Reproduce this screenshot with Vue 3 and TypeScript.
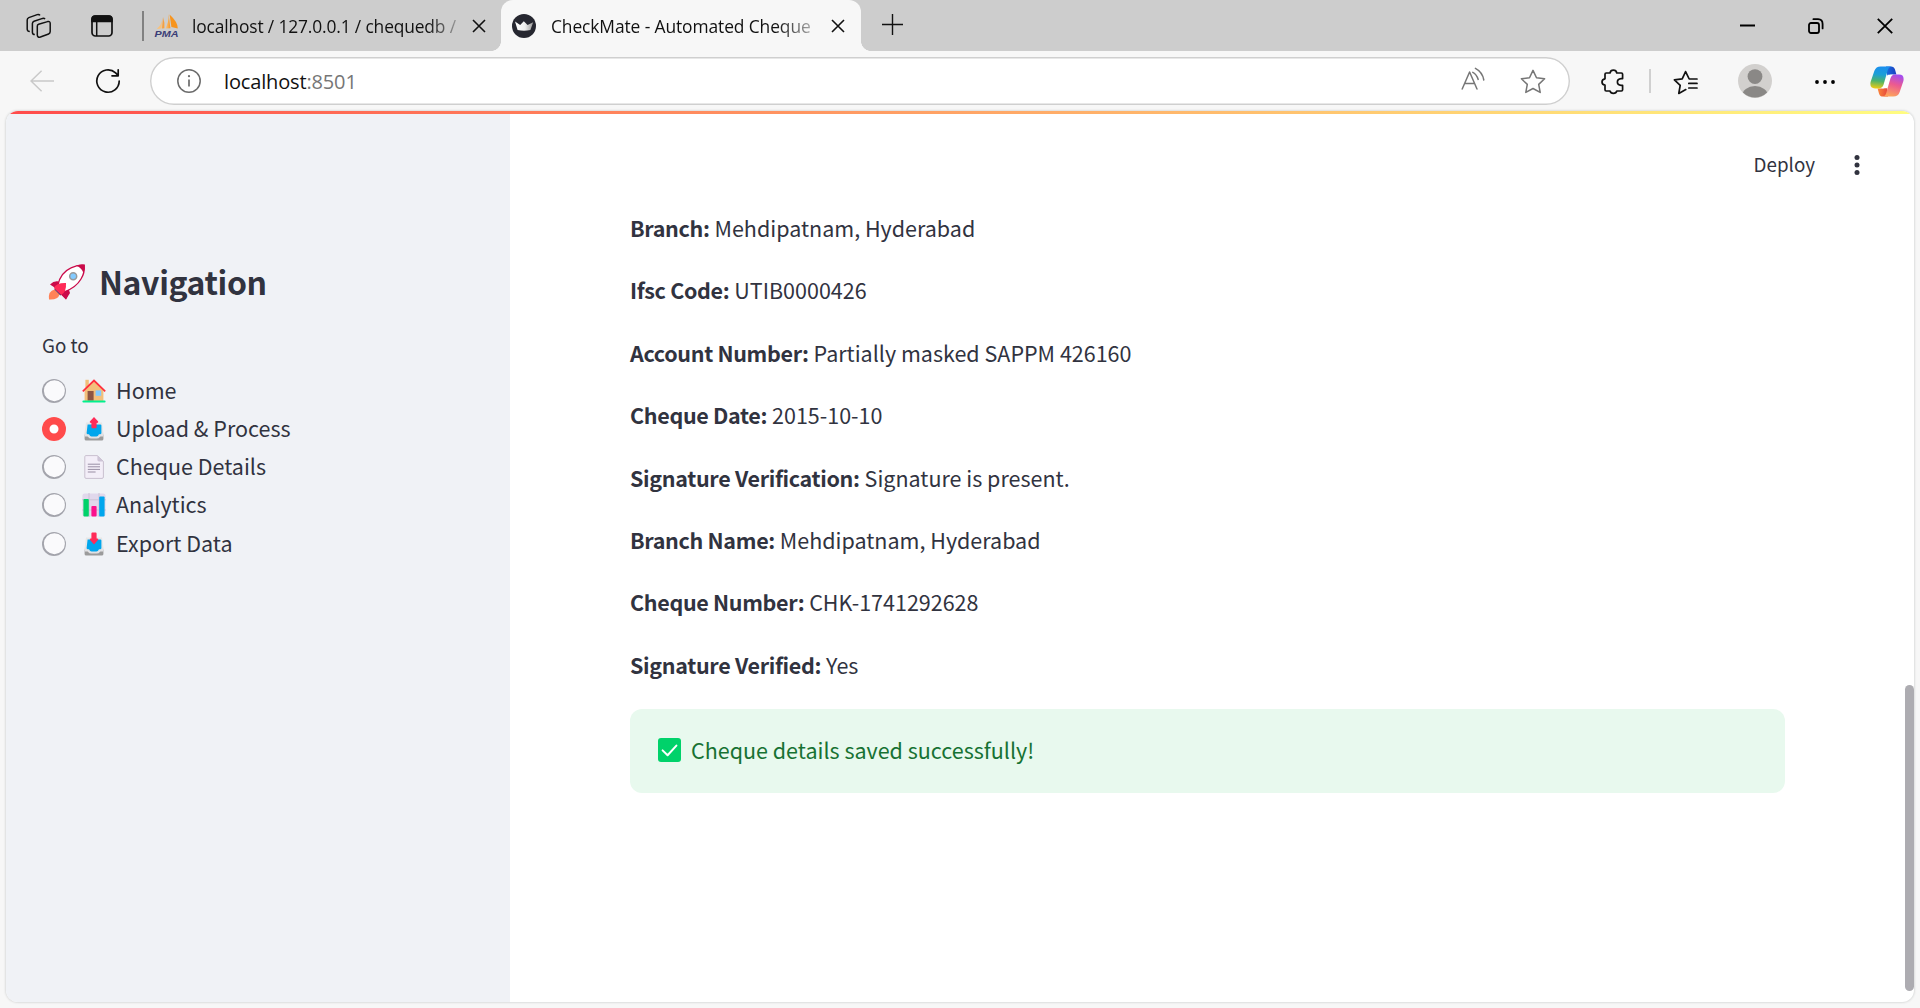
<script setup lang="ts">
interface Detail {
  label: string
  value: string
}

const details: Detail[] = [
  { label: 'Branch:', value: 'Mehdipatnam, Hyderabad' },
  { label: 'Ifsc Code:', value: 'UTIB0000426' },
  { label: 'Account Number:', value: 'Partially masked SAPPM 426160' },
  { label: 'Cheque Date:', value: '2015-10-10' },
  { label: 'Signature Verification:', value: 'Signature is present.' },
  { label: 'Branch Name:', value: 'Mehdipatnam, Hyderabad' },
  { label: 'Cheque Number:', value: 'CHK-1741292628' },
  { label: 'Signature Verified:', value: 'Yes' },
]

type IconName = 'home' | 'upload' | 'page' | 'chart' | 'export'

const pages: { label: string; icon: IconName; active?: boolean }[] = [
  { label: 'Home', icon: 'home' },
  { label: 'Upload & Process', icon: 'upload', active: true },
  { label: 'Cheque Details', icon: 'page' },
  { label: 'Analytics', icon: 'chart' },
  { label: 'Export Data', icon: 'export' },
]
</script>

<template>
  <div class="window">
    <header class="tabbar">
      <svg class="ic-work" width="28" height="28" viewBox="0 0 28 28" fill="none" stroke="#111" stroke-width="1.5" stroke-linejoin="round">
        <path d="M13.6 12.2 L22.6 9.6 Q25.2 9 25.2 11.4 V19.6 Q25.2 21.4 23.6 22 L15.4 25 Q12.6 25.9 12.3 23.2 V14.2 Q12.2 12.6 13.6 12.2Z" />
        <path d="M9.8 22.6 Q7.6 22.6 7.4 20.4 V11.6 Q7.4 9.8 9 9.2 L17.6 6.4 Q19.2 6 20 7.2" />
        <path d="M4.8 19.6 Q2.4 19.4 2.2 17.2 V8 Q2.2 6.2 3.8 5.6 L12.2 2.6 Q14 2 15 3.4" />
      </svg>
      <svg class="ic-vert" width="24" height="24" viewBox="0 0 24 24">
        <rect x="2" y="2" width="20" height="20" rx="3.4" fill="none" stroke="#111" stroke-width="1.7" />
        <path d="M1.2 8.2 V5 Q1.2 1.2 5 1.2 H19 Q22.8 1.2 22.8 5 V8.2Z" fill="#111" />
        <path d="M6.7 8 V22" stroke="#111" stroke-width="1.5" />
      </svg>
      <span class="tab-divider"></span>
      <div class="tab tab-back">
        <svg class="pma" width="26" height="26" viewBox="0 0 26 26">
          <defs>
            <linearGradient id="sail" x1="0" x2="1" y1="0" y2="0">
              <stop offset="0" stop-color="#f8c98a" />
              <stop offset="1" stop-color="#f7941d" />
            </linearGradient>
          </defs>
          <path d="M8.2 5 Q8.4 11 2.8 16 L7.6 15.4Z" fill="#f9c27c" />
          <path d="M9 4 Q11 10 10.4 15.2 L8 15.4Z" fill="#f5a040" />
          <path d="M14.6 1 Q15 9 11.4 15.4 L16.4 15.2Z" fill="url(#sail)" />
          <path d="M15.6 1.4 Q24 9 23.8 15.6 L17.4 14Z" fill="#f7941d" />
          <text x="0.5" y="24" font-size="8.6" font-weight="700" font-style="italic" textLength="24" lengthAdjust="spacingAndGlyphs" fill="#3a3d77">PMA</text>
        </svg>
        <span class="title title-back">localhost / 127.0.0.1 / chequedb /</span>
        <svg class="x" width="14" height="14" viewBox="0 0 14 14" stroke="#111" stroke-width="1.6"><path d="M1 1 L13 13 M13 1 L1 13" /></svg>
      </div>
      <div class="tab tab-front">
        <svg width="24" height="24" viewBox="0 0 24 24">
          <defs>
            <linearGradient id="crown" x1="0" x2="1" y1="0" y2="0">
              <stop offset="0" stop-color="#fff" />
              <stop offset=".55" stop-color="#eee" />
              <stop offset="1" stop-color="#999" />
            </linearGradient>
          </defs>
          <circle cx="12" cy="12" r="12" fill="#262730" />
          <path d="M3 7.6 L8.2 11 L11.8 7.2 L15.6 11 L21.2 8.2 L18.4 16 Q12 17.4 5.6 16Z" fill="url(#crown)" />
        </svg>
        <span class="title title-front">CheckMate - Automated Cheque</span>
        <svg class="x" width="14" height="14" viewBox="0 0 14 14" stroke="#111" stroke-width="1.6"><path d="M1 1 L13 13 M13 1 L1 13" /></svg>
      </div>
      <svg class="plus" width="21" height="21" viewBox="0 0 21 21" stroke="#111" stroke-width="1.4"><path d="M10.5 0 V21 M0 10.5 H21" /></svg>
      <div class="controls">
        <svg width="15" height="16" viewBox="0 0 15 16"><path d="M0 7.5 H15" stroke="#000" stroke-width="2" /></svg>
        <svg width="16" height="16" viewBox="0 0 16 16" fill="none" stroke="#000" stroke-width="1.8">
          <rect x="1" y="5" width="10" height="10" rx="2" />
          <path d="M5.4 1.2 H10 Q14.6 1.4 14.6 6 V10.4" stroke-linecap="round" />
        </svg>
        <svg width="16" height="16" viewBox="0 0 16 16" stroke="#000" stroke-width="1.8"><path d="M.8 .8 L15.2 15.2 M15.2 .8 L.8 15.2" /></svg>
      </div>
    </header>

    <div class="toolbar">
      <svg class="back" width="24" height="22" viewBox="0 0 24 22" fill="none" stroke="#c9c9c9" stroke-width="1.5"><path d="M24 11 H1 M11.6 .8 L1 11 L11.6 21.2" /></svg>
      <svg class="reload" width="26" height="26" viewBox="0 0 26 26" fill="none" stroke="#111" stroke-width="1.7" stroke-linecap="round" stroke-linejoin="round"><path d="M24.2 13 A11.2 11.2 0 1 1 20.6 4.8 L23 7.4 M23.2 1.8 V7.8 H17" /></svg>
      <div class="address">
        <svg class="info" width="24" height="24" viewBox="0 0 24 24" fill="none" stroke="#6b6b6b" stroke-width="1.5">
          <circle cx="12" cy="12" r="11.2" />
          <path d="M12 10.4 V17.6" stroke-width="1.7" />
          <circle cx="12" cy="7.2" r="1.1" fill="#6b6b6b" stroke="none" />
        </svg>
        <span class="url">localhost<span class="port">:8501</span></span>
        <svg class="aloud" width="24" height="24" viewBox="0 0 24 24" fill="none" stroke="#767676" stroke-width="1.5" stroke-linecap="round" stroke-linejoin="round">
          <path d="M1.2 22 L8.6 5 L16 22 M3.8 16.4 H13.4" />
          <path d="M11.8 5.4 Q15.6 7.4 17.2 12.4 M14.4 1.4 Q21.4 5 22.8 13" />
        </svg>
        <svg class="star" width="26" height="25" viewBox="0 0 26 25" fill="none" stroke="#767676" stroke-width="1.5" stroke-linejoin="round"><path d="M13 1.4 L16.5 8.7 L24.6 9.8 L18.7 15.4 L20.2 23.4 L13 19.5 L5.8 23.4 L7.3 15.4 L1.4 9.8 L9.5 8.7Z" /></svg>
      </div>
      <svg class="puzzle" width="24" height="26" viewBox="0 0 24 26" fill="none" stroke="#111" stroke-width="1.7" stroke-linejoin="round">
        <path d="M5.2 4 H9 Q9.6 1.2 12.4 1.2 Q15.2 1.2 15.8 4 H20.4 Q21.6 4 21.6 5.2 V9.6 H20.2 Q16.4 10 16.4 13 Q16.4 16 20.2 16.4 H21.6 V20.8 Q21.6 22 20.4 22 H15.8 Q15.2 24.4 12.4 24.4 Q9.6 24.4 9 22 H5.2 Q4 22 4 20.8 V16.2 Q1 15.8 1 13 Q1 10.2 4 9.8 V5.2 Q4 4 5.2 4Z" />
      </svg>
      <span class="tool-divider"></span>
      <svg class="favs" width="26" height="25" viewBox="0 0 26 25" fill="none" stroke="#111" stroke-width="1.7" stroke-linejoin="round" stroke-linecap="round">
        <path d="M24 9 H16.2 L12.6 1.6 L9.2 8.8 L1.4 9.8 L7.2 15.4 L5.8 23.4 L12.8 19.6" />
        <path d="M15.8 13.4 H24 M15.8 18 H24" />
      </svg>
      <svg class="avatar" width="34" height="34" viewBox="0 0 34 34">
        <defs><clipPath id="disc"><circle cx="17" cy="17" r="16.6" /></clipPath></defs>
        <circle cx="17" cy="17" r="17" fill="#d2d0ce" />
        <g clip-path="url(#disc)" fill="#8a8886">
          <circle cx="17" cy="12.6" r="7.4" />
          <ellipse cx="17" cy="32" rx="13" ry="10" />
        </g>
      </svg>
      <svg class="dots" width="20" height="4" viewBox="0 0 20 4"><circle cx="2" cy="2" r="1.9" /><circle cx="10" cy="2" r="1.9" /><circle cx="18" cy="2" r="1.9" /></svg>
      <svg class="copilot" width="34" height="31" viewBox="0 0 34 31">
        <defs>
          <linearGradient id="cpA" x1=".3" x2=".2" y1="0" y2="1">
            <stop offset="0" stop-color="#1b8fee" />
            <stop offset=".35" stop-color="#1c9fd6" />
            <stop offset=".65" stop-color="#4cb36c" />
            <stop offset="1" stop-color="#f2cc10" />
          </linearGradient>
          <linearGradient id="cpB" x1=".7" x2=".4" y1="0" y2="1">
            <stop offset="0" stop-color="#a34df0" />
            <stop offset=".45" stop-color="#ec5a90" />
            <stop offset="1" stop-color="#fda55c" />
          </linearGradient>
          <linearGradient id="cpC" x1="0" x2="1"><stop offset="0" stop-color="#1b6fe0" /><stop offset="1" stop-color="#1a3fc0" /></linearGradient>
          <linearGradient id="cpD" x1="0" x2="1"><stop offset="0" stop-color="#fb8a3c" /><stop offset="1" stop-color="#e5433d" /></linearGradient>
        </defs>
        <path d="M16 .4 H21 Q24 .4 25 3.6 L26.4 8.6 H21 Q18.6 8.6 17.4 12Z" fill="url(#cpC)" />
        <path d="M18 30.6 H13 Q10 30.6 9 27.4 L7.6 22.4 H13 Q15.6 22.4 16.8 19Z" fill="url(#cpD)" />
        <path d="M17.6 8.8 H23 L17 22.2 H11.6Z" fill="#fff" />
        <path d="M10.6 .4 H21.6 Q18.6 .8 17.6 4.6 L13.6 18.6 Q12.4 22.4 9 22.4 H5 Q-.6 22.4 .6 16 L4.4 4.8 Q6 .4 10.6 .4Z" fill="url(#cpA)" />
        <path d="M23.4 30.6 H12.4 Q15.4 30.2 16.4 26.4 L20.4 12.4 Q21.6 8.6 25 8.6 H29 Q34.6 8.6 33.4 15 L29.6 26.2 Q28 30.6 23.4 30.6Z" fill="url(#cpB)" />
      </svg>
    </div>

    <div class="page">
      <div class="decoration"></div>
      <div class="body">
        <aside class="sidebar">
          <h1>
            <svg class="rocket" width="38" height="38" viewBox="0 0 38 38">
              <path d="M1 36.4 Q0 28 6.6 26.6 L11.6 31.4 Q10 37 1 36.4Z" fill="#ff8257" />
              <path d="M6.4 26.4 L10 22 L17 29 L12.4 32.4Z" fill="#533566" />
              <path d="M2 21.4 Q6.4 17 11.4 18.6 L17 29.4 Q21 26.4 21 29 L18 36.6 L14.6 32.8 L6.2 24.2Z" fill="#ca0b4a" />
              <path d="M20.6 26 L22 30 L18 36.6 L12.8 31.6Z" fill="#ca0b4a" />
              <path d="M9.8 22.6 Q12 9.8 23 4.8 Q30 1.4 36.2 2.2 Q37 9.6 33 16 Q28 24.6 16.4 28.8Z" fill="#fff" stroke="#ca0b4a" stroke-width="1.3" />
              <path d="M28 2.6 Q32.6 1.2 36.6 1.8 Q37.2 6 35.4 10.6 Q34.6 5.4 28 2.6Z" fill="#ca0b4a" />
              <path d="M5.8 25 Q8.6 19.6 18 20 Q18.6 29 13.2 32Z" fill="#ff2b58" />
              <circle cx="25.2" cy="13.2" r="3.5" fill="#83cbff" stroke="#999" stroke-width="1.5" />
            </svg>
            <span>Navigation</span>
          </h1>
          <p class="goto">Go to</p>
          <ul class="radios">
            <li v-for="p in pages" :key="p.label">
              <span class="radio" :class="{ on: p.active }"></span>
              <svg width="24" height="24" viewBox="0 0 24 24">
                <template v-if="p.icon === 'home'">
                  <rect x="3.4" y=".8" width="3.4" height="8" fill="#f1bf7a" />
                  <path d="M2.6 11.4 L12 2.6 L21.4 11.4 V22 H2.6Z" fill="#f3c07b" />
                  <rect x="5.6" y="12" width="6" height="9.6" fill="#8c5543" />
                  <rect x="13.6" y="11.4" width="5.6" height="5.4" fill="#83cbff" />
                  <path d="M.8 12.4 L12 1.6 L23.2 12.4" fill="none" stroke="#ff2f3c" stroke-width="1.8" />
                  <rect x=".4" y="21.6" width="23.2" height="2" rx="1" fill="#00f08e" />
                </template>
                <template v-else-if="p.icon === 'upload' || p.icon === 'export'">
                  <path d="M4 5.6 H20 L21.6 17 H2.4Z" fill="#e6e6e6" />
                  <path d="M2.6 17.4 H7 Q8 20 10 20 H14 Q16 20 17 17.4 H21.4 V22 Q21.4 23.6 19.8 23.6 H4.2 Q2.6 23.6 2.6 22Z" fill="#9b9b9b" />
                  <path d="M2.8 15.6 H7 Q8 19 10 19 H14 Q16 19 17 15.6 H21.2 L21.4 19.4 H18.4 Q16.6 21.6 14.6 21.6 H9.4 Q7.4 21.6 5.6 19.4 H2.6Z" fill="#e1e1e4" />
                  <path d="M5.6 7.4 H18.4 Q19.4 7.4 19.4 8.6 V16.2 Q19.2 17.2 18 17.2 H17 Q16 19.4 14.4 19.4 H9.6 Q8 19.4 7 17.2 H6 Q4.6 17.2 4.6 16Z" fill="#00a6ed" />
                  <path v-if="p.icon === 'upload'" d="M12 0 L16.2 4.6 Q16.6 6 15 6 H14.6 V10 Q14.6 11.2 13.6 11.2 H10.4 Q9.4 11.2 9.4 10 V6 H9 Q7.4 6 7.8 4.6Z" fill="#ff2b58" />
                  <path v-else d="M12 12.4 L16.2 7.8 Q16.6 6.6 15 6.6 H14.6 V1.6 Q14.6 .6 13.6 .6 H10.4 Q9.4 .6 9.4 1.6 V6.6 H9 Q7.4 6.6 7.8 7.8Z" fill="#ff2b58" />
                </template>
                <template v-else-if="p.icon === 'page'">
                  <path d="M3.8 .6 H15.4 L21.4 6.4 V22 Q21.4 23.4 20 23.4 H4 Q2.8 23.4 2.8 22 V1.8 Q2.8 .6 3.8 .6Z" fill="#f3eef8" stroke="#c9c0cf" stroke-width="1" />
                  <path d="M15.4 .6 L21.4 6.4 H17 Q15.4 6.4 15.4 5Z" fill="#cdc4d6" />
                  <path d="M5.8 9.2 H18 M5.8 11.8 H18 M5.8 14.4 H18 M5.8 17 H13.6" stroke="#998ea4" stroke-width="1" />
                </template>
                <template v-else>
                  <rect x=".4" y=".4" width="23.2" height="23.2" rx="2.4" fill="#e1d8ec" />
                  <path d="M7 0 V24 M17 0 V24 M0 6.8 H24 M0 17 H24" stroke="#cdc4d6" stroke-width="1" />
                  <rect x="1.4" y="6" width="5.4" height="17.6" rx="1" fill="#00d26a" />
                  <rect x="9.4" y="13" width="5.2" height="10.6" rx="1" fill="#fc0f8c" />
                  <rect x="17.2" y="3.4" width="5.4" height="20.2" rx="1" fill="#00a6ed" />
                </template>
              </svg>
              <span class="page-name">{{ p.label }}</span>
            </li>
          </ul>
        </aside>

        <main class="main">
          <div class="app-header">
            <span class="deploy">Deploy</span>
            <svg width="6" height="20" viewBox="0 0 6 20" fill="#31333f"><circle cx="3" cy="2.5" r="2.5" /><circle cx="3" cy="10" r="2.5" /><circle cx="3" cy="17.5" r="2.5" /></svg>
          </div>
          <div class="content">
            <p v-for="d in details" :key="d.label"><strong>{{ d.label }}</strong> {{ d.value }}</p>
            <div class="alert">
              <svg width="23" height="24" viewBox="0 0 23 24">
                <rect width="23" height="24" rx="3" fill="#00d26a" />
                <path d="M4.6 12.4 L9.6 17.2 L18.4 7.6" fill="none" stroke="#fff" stroke-width="2" stroke-linecap="round" stroke-linejoin="round" />
              </svg>
              <span>Cheque details saved successfully!</span>
            </div>
          </div>
        </main>
        <div class="scroll"><div class="thumb"></div></div>
      </div>
    </div>
  </div>
</template>

<style>
body {
  margin: 0;
  overflow: hidden;
}
</style>

<style scoped>
.window {
  width: 1920px;
  height: 1008px;
  display: flex;
  flex-direction: column;
  overflow: hidden;
  background: #f7f7f7;
  font-family: "Noto Sans CJK SC", "Source Sans Pro", sans-serif;
  color: #31333f;
}
svg {
  display: block;
  flex: none;
}
.tabbar {
  height: 51px;
  flex: none;
  display: flex;
  align-items: center;
  background: #cdcdcd;
  font-family: "Open Sans", "Segoe UI", sans-serif;
}
.ic-work { margin-left: 25px; }
.ic-vert { margin-left: 37px; margin-top: 1px; }
.tab-divider {
  width: 2px;
  height: 30px;
  margin: 1px 0 0 28px;
  background: #818181;
}
.tab {
  display: flex;
  align-items: center;
  box-sizing: border-box;
  height: 51px;
}
.tab-back {
  width: 358px;
  padding: 0 16px 0 10px;
}
.pma { font-family: "Liberation Sans", sans-serif; }
.title {
  font-size: 17.4px;
  line-height: 26px;
  white-space: nowrap;
  overflow: hidden;
  color: #111;
}
.title-back {
  width: 268px;
  margin-left: 12px;
  letter-spacing: -0.15px;
  -webkit-mask-image: linear-gradient(90deg, #000 88%, transparent 103%);
  mask-image: linear-gradient(90deg, #000 88%, transparent 103%);
}
.title-front {
  width: 268px;
  margin-left: 15px;
  letter-spacing: -0.1px;
  -webkit-mask-image: linear-gradient(90deg, #000 84%, transparent 104%);
  mask-image: linear-gradient(90deg, #000 84%, transparent 104%);
}
.x { margin-left: auto; margin-top: 1px; }
.tab-front {
  position: relative;
  width: 360px;
  margin-left: -1px;
  padding: 0 16px 0 11px;
  background: #f7f7f7;
  border-radius: 12px 12px 0 0;
}
.tab-front::before,
.tab-front::after {
  content: "";
  position: absolute;
  bottom: 0;
  width: 10px;
  height: 10px;
}
.tab-front::before {
  left: -10px;
  background: radial-gradient(circle at 0 0, transparent 9.6px, #f7f7f7 10.2px);
}
.tab-front::after {
  right: -10px;
  background: radial-gradient(circle at 100% 0, transparent 9.6px, #f7f7f7 10.2px);
}
.plus { margin-left: 21px; margin-bottom: 2px; }
.controls {
  margin-left: auto;
  margin-right: 27px;
  display: flex;
  gap: 53px;
}
.toolbar {
  height: 60px;
  flex: none;
  display: flex;
  align-items: center;
  font-family: "Open Sans", "Segoe UI", sans-serif;
}
.back { margin-left: 30px; margin-bottom: 1px; }
.reload { margin-left: 41px; }
.address {
  width: 1420px;
  height: 48px;
  margin-left: 29px;
  box-sizing: border-box;
  display: flex;
  align-items: center;
  border-radius: 24px;
  background: #fff;
  box-shadow: inset 0 0 0 1.4px #cfcfcf;
  padding: 0 24px 0 27px;
}
.url {
  margin-left: 23px;
  margin-top: 1px;
  font-size: 20px;
  line-height: 30px;
  letter-spacing: -0.15px;
  color: #111;
}
.port { color: #767676; }
.aloud { margin-left: auto; margin-bottom: 4px; }
.star { margin-left: 35px; }
.puzzle { margin-left: 31px; margin-top: 2px; }
.tool-divider {
  width: 2px;
  height: 24px;
  margin-left: 24px;
  background: #d0d0d0;
}
.favs { margin-left: 22px; margin-top: 2px; }
.avatar { margin-left: 39px; }
.dots { margin-left: 43px; margin-top: 1px; }
.copilot { margin-left: 35px; }
.page {
  width: 1908px;
  height: 891px;
  margin-left: 6px;
  flex: none;
  display: flex;
  flex-direction: column;
  overflow: hidden;
  border-radius: 12px;
  background: #fff;
  box-shadow: 0 0 2px 1px #dcdddd;
}
.decoration {
  height: 3px;
  flex: none;
  background: linear-gradient(90deg, #ff4b4b, #fffd80);
}
.body {
  flex: 1;
  display: flex;
}
.sidebar {
  width: 504px;
  box-sizing: border-box;
  padding: 145px 36px 0;
  background: #f0f2f6;
}
h1 {
  margin: 0;
  height: 44px;
  display: flex;
  align-items: center;
  font-size: 32px;
  line-height: 44px;
  font-weight: 700;
  letter-spacing: -0.38px;
}
.rocket { margin-left: 6px; margin-top: 2px; }
h1 span { margin-left: 13px; }
.goto {
  margin: 28px 0 0;
  font-size: 18.8px;
  line-height: 28px;
}
.radios {
  list-style: none;
  margin: 12.4px 0 0;
  padding: 0;
}
.radios li {
  height: 38.3px;
  display: flex;
  align-items: center;
}
.radio {
  width: 24px;
  height: 24px;
  border-radius: 50%;
  background: #fafafc;
  box-shadow: inset 0.4px -0.3px 0 1.5px #a3a4ac;
}
.radio.on {
  background: #fff;
  box-shadow: inset 0 0 0 7.5px #ff4b4b;
}
.radios svg { margin-left: 16px; }
.page-name {
  margin-left: 10px;
  margin-bottom: 2px;
  font-size: 21.5px;
  line-height: 34px;
}
.main {
  flex: 1;
  display: flex;
  flex-direction: column;
}
.app-header {
  height: 95px;
  box-sizing: border-box;
  display: flex;
  align-items: center;
  justify-content: flex-end;
  padding: 7px 45px 0 0;
}
.deploy {
  margin-right: 39px;
  margin-bottom: 2px;
  font-size: 18.8px;
  line-height: 28px;
}
.content {
  margin: 0 120px;
  font-size: 21.5px;
  line-height: 38.4px;
}
.content p {
  margin: 0 0 24px;
}
.content strong {
  font-weight: 700;
  letter-spacing: -0.32px;
}
.alert {
  height: 84px;
  margin-top: 24.6px;
  box-sizing: border-box;
  display: flex;
  align-items: center;
  padding-left: 28px;
  border-radius: 12px;
  background: #e8f9ee;
  color: #177233;
}
.alert svg { margin-bottom: 1px; }
.alert span {
  margin-left: 10px;
  margin-bottom: 1px;
}
.scroll {
  width: 9px;
  padding-top: 571px;
}
.thumb {
  height: 306px;
  border-radius: 4.5px;
  background: #adacb1;
}
</style>
